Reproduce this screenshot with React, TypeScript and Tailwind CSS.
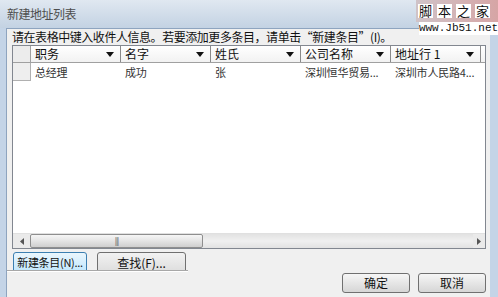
import React from 'react';

const cols = ['职务', '名字', '姓氏', '公司名称', '地址行 1'];
const row = ['总经理', '成功', '张', '深圳恒华贸易...', '深圳市人民路4...'];

function Arrow() {
  return (
    <svg width="8" height="5" viewBox="0 0 8 5" className="shrink-0">
      <path d="M0 0 L8 0 L4 5 Z" fill="#111" />
    </svg>
  );
}

function Btn({ label, className }: { label: string; className?: string }) {
  return (
    <div
      className={`flex items-center justify-center rounded-[3px] border border-[#707070] bg-gradient-to-b from-[#f6f6f6] via-[#e6e6e6] to-[#d6d6d6] text-[12px] text-[#111] ${className ?? ''}`}
    >
      {label}
    </div>
  );
}

export default function App() {
  return (
    <div
      className="w-[498px] h-[297px] overflow-hidden flex flex-col bg-[#c4d4e7]"
      style={{ fontFamily: '"Noto Sans CJK SC", "Noto Sans", sans-serif' }}
    >
      {/* title bar */}
      <div className="relative h-[28px] shrink-0 flex items-center pl-[7px] bg-gradient-to-b from-[#e0e8f1] to-[#c3d2e3]">
        <span className="text-[12px] text-[#4d4d4d] tracking-[-0.5px]">新建地址列表</span>
        {/* watermark */}
        <div className="absolute right-0 top-0 w-[82px] h-[22px] bg-gradient-to-r from-[#cfc3c8] to-[#d6a5a5] flex items-center justify-end gap-[4px] pr-[8px]">
          {['脚', '本', '之', '家'].map((c) => (
            <span key={c} className="bg-white text-[13px] leading-[14px] px-[1px] text-[#111]">
              {c}
            </span>
          ))}
        </div>
        <div className="absolute right-0 top-[22px] w-[79px] h-[13px] bg-white flex items-center justify-center text-[11px] text-[#111]" style={{ fontFamily: '"Liberation Mono", monospace' }}>
          www.Jb51.net
        </div>
      </div>

      <div className="flex-1 flex pl-[6px] pr-[8px]">
        <div className="flex-1 flex flex-col bg-[#f0f0f0] border-l border-t border-[#8ea4bf] pl-[5px]">
          {/* instructions */}
          <div className="h-[16px] flex items-center text-[12px] text-[#111] tracking-[-0.45px] whitespace-nowrap">
            请在表格中键入收件人信息。若要添加更多条目，请单击“新建条目”(I)。
          </div>

          {/* grid */}
          <div className="w-[474px] h-[204px] border border-[#828790] bg-white flex flex-col">
            <div className="h-[17px] flex border-b border-[#a0a0a0] bg-gradient-to-b from-white to-[#f2f2f2]">
              <div className="w-[18px] border-r border-[#a0a0a0] bg-[#ececec]" />
              {cols.map((c) => (
                <div key={c} className="w-[90px] flex items-center justify-between pl-[4px] pr-[6px] border-r border-[#8a8a8a] text-[12px] text-[#111]">
                  <span>{c}</span>
                  <Arrow />
                </div>
              ))}
            </div>
            <div className="h-[18px] flex">
              <div className="w-[18px] border-r border-b border-[#b0b0b0] bg-[#eeeeee]" />
              {row.map((c, i) => (
                <div key={i} className="w-[90px] flex items-center pl-[4px] text-[11px] text-[#333] whitespace-nowrap overflow-hidden tracking-[-0.2px]">
                  {c}
                </div>
              ))}
            </div>
            <div className="flex-1" />
            {/* horizontal scrollbar */}
            <div className="h-[15px] flex items-center bg-[#eaeaea] border-t border-[#e0e0e0]">
              <div className="w-[17px] flex justify-center">
                <svg width="4" height="7" viewBox="0 0 4 7"><path d="M4 0 L4 7 L0 3.5 Z" fill="#555" /></svg>
              </div>
              <div className="w-[173px] h-[14px] rounded-[2px] border border-[#8e8e8e] bg-gradient-to-b from-[#f6f6f6] via-[#e4e4e4] to-[#cfcfcf] flex items-center justify-center">
                <span className="text-[8px] leading-none text-[#555] tracking-[-1px]">|||</span>
              </div>
              <div className="flex-1 h-full bg-gradient-to-b from-[#e2e2e2] via-[#f0f0f0] to-[#e2e2e2]" />
              <div className="w-[12px] flex justify-center">
                <svg width="4" height="7" viewBox="0 0 4 7"><path d="M0 0 L0 7 L4 3.5 Z" fill="#555" /></svg>
              </div>
            </div>
          </div>

          {/* bottom area */}
          <div className="flex-1 flex">
            <div className="flex flex-col">
              <div className="mt-[3px] h-[18px] flex gap-[10px] ml-px overflow-hidden">
                <div className="w-[74px] h-[22px] rounded-[3px] border border-[#3c7fb1] bg-gradient-to-b from-[#eaf6fd] to-[#bee6fd] text-[11px] text-[#111] flex items-start justify-center pt-[1px] whitespace-nowrap tracking-[-0.3px]">
                  新建条目(N)...
                </div>
                <div className="w-[89px] h-[22px] rounded-[3px] border border-[#707070] bg-gradient-to-b from-[#f2f2f2] to-[#dcdcdc] text-[12px] text-[#111] flex items-start justify-center pt-[1px]">
                  查找(F)...
                </div>
              </div>
              <div className="-ml-[5px] w-[181px] border-t border-[#a8a8a8] shadow-[0_1px_0_#ffffff]" />
            </div>
            <div className="ml-auto mr-[4px] mt-[24px] flex gap-[8px]">
              <Btn label="确定" className="w-[68px] h-[20px]" />
              <Btn label="取消" className="w-[68px] h-[20px]" />
            </div>
          </div>
        </div>
      </div>
    </div>
  );
}
